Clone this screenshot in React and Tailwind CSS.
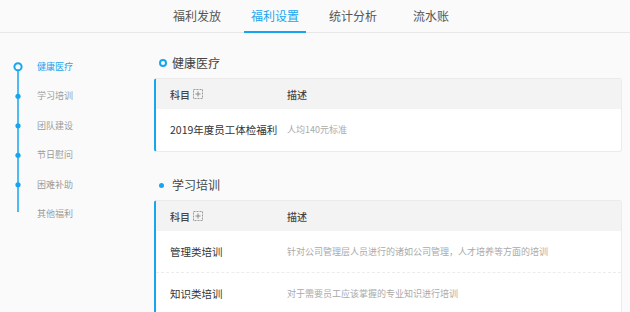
import React from "react";

const tabs = ["福利发放", "福利设置", "统计分析", "流水账"];
const menu = ["健康医疗", "学习培训", "团队建设", "节日慰问", "困难补助", "其他福利"];

const sections = [
  {
    title: "健康医疗",
    active: true,
    rows: [{ name: "2019年度员工体检福利", desc: "人均140元标准" }],
  },
  {
    title: "学习培训",
    active: false,
    rows: [
      {
        name: "管理类培训",
        desc: "针对公司管理层人员进行的诸如公司管理，人才培养等方面的培训",
      },
      { name: "知识类培训", desc: "对于需要员工应该掌握的专业知识进行培训" },
    ],
  },
];

function PlusBox() {
  return (
    <svg width="10" height="10" viewBox="0 0 10 10" className="ml-[3px]">
      <rect
        x="0.5"
        y="0.5"
        width="9"
        height="9"
        fill="none"
        stroke="#9a9a9a"
        strokeDasharray="2 1"
      />
      <path d="M5 2.5v5M2.5 5h5" stroke="#8a8a8a" strokeWidth="1" />
    </svg>
  );
}

// timeline drawing: line + nodes
function Timeline() {
  const step = 29.5;
  return (
    <svg
      width="36"
      height="160"
      viewBox="0 0 36 160"
      className="absolute left-0 top-[19px]"
    >
      <line x1="18" y1="14.75" x2="18" y2={14.75 + step * 5} stroke="#16a6f0" strokeWidth="1.5" />
      {menu.map((m, i) =>
        i === 0 ? (
          <circle key={m} cx="18" cy="14.75" r="3.6" fill="#fafafa" stroke="#16a6f0" strokeWidth="2" />
        ) : (
          <circle key={m} cx="18" cy={14.75 + step * i} r="2.6" fill="#16a6f0" />
        )
      )}
    </svg>
  );
}

export default function App() {
  return (
    <div
      className="w-[630px] h-[312px] overflow-hidden bg-[#fafafa] text-[#333]"
      style={{ fontFamily: '"Noto Sans CJK SC", "Liberation Sans", sans-serif' }}
    >
      {/* TOP TABS */}
      <div className="h-[33px] border-b border-[#e8e8e8] flex pl-[158px]">
        {tabs.map((t, i) => (
          <div key={t} className="w-[78px] flex justify-center">
            <span
              className={`h-[33px] px-[7px] pt-[7px] text-[12px] leading-[18px] border-b-[2px] ${
                i === 1
                  ? "border-[#16a6f0] text-[#16a6f0]"
                  : "border-transparent text-[#555]"
              }`}
            >
              {t}
            </span>
          </div>
        ))}
      </div>

      <div className="flex">
        {/* SIDEBAR */}
        <div className="w-[154px] shrink-0 relative pt-[19px] pl-[37px]">
          <Timeline />
          {menu.map((m, i) => (
            <div key={m} className="h-[29.5px] flex items-center">
              <span
                className={`text-[9px] leading-[12px] ${
                  i === 0 ? "text-[#16a6f0]" : "text-[#9a9a9a]"
                }`}
              >
                {m}
              </span>
            </div>
          ))}
        </div>

        {/* CONTENT */}
        <div className="w-[468px] pt-[20px]">
          {sections.map((s, si) => (
            <div key={s.title} className={si > 0 ? "mt-[23px]" : ""}>
              <div className="h-[20px] flex items-center mb-[5px]">
                {s.active ? (
                  <div className="ml-[5px] w-[8px] h-[8px] rounded-full border-[2px] border-[#16a6f0]" />
                ) : (
                  <div className="ml-[5px] w-[5px] h-[5px] rounded-full bg-[#16a6f0] mr-[3px]" />
                )}
                <span className="ml-[5px] text-[12px] text-[#444]">{s.title}</span>
              </div>

              <div className="bg-white border border-[#ebebeb] border-l-[2px] border-l-[#16a6f0] rounded-[3px] overflow-hidden">
                <div className="h-[30px] bg-[#f3f3f3] flex items-center pl-[14px] text-[10px] font-medium text-[#444]">
                  <div className="w-[117px] flex items-center">
                    科目
                    <PlusBox />
                  </div>
                  <div>描述</div>
                </div>
                {s.rows.map((r, ri) => (
                  <div
                    key={r.name}
                    className={`h-[42px] flex items-center pl-[14px] ${
                      ri < s.rows.length - 1 ? "border-b border-dashed border-[#ececec]" : ""
                    }`}
                  >
                    <div className="w-[117px] text-[10.5px] text-[#333]">{r.name}</div>
                    <div className="text-[9px] text-[#aaa]">{r.desc}</div>
                  </div>
                ))}
              </div>
            </div>
          ))}
        </div>
      </div>
    </div>
  );
}
